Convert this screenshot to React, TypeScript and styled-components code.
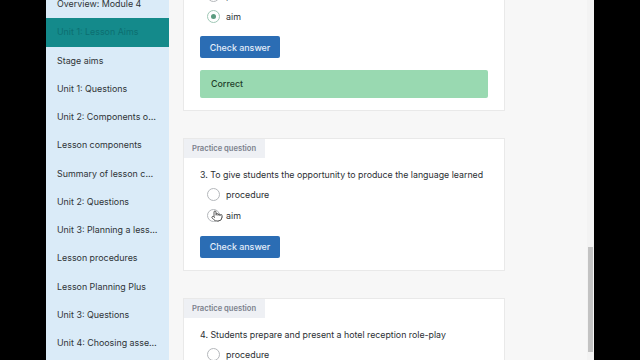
import React from 'react';
import styled, { createGlobalStyle } from 'styled-components';
import { Pointer } from 'lucide-react';

const GlobalStyle = createGlobalStyle`
  html, body {
    margin: 0;
    padding: 0;
    background: #000;
    overflow: hidden;
  }
  body {
    font-family: Inter, 'Noto Sans', sans-serif;
  }
`;

const sidebarItems = [
  'Overview: Module 4',
  'Unit 1: Lesson Aims',
  'Stage aims',
  'Unit 1: Questions',
  'Unit 2: Components of the lesson',
  'Lesson components',
  'Summary of lesson components',
  'Unit 2: Questions',
  'Unit 3: Planning a lesson',
  'Lesson procedures',
  'Lesson Planning Plus',
  'Unit 3: Questions',
  'Unit 4: Choosing assessment',
];

type Question = {
  number: number;
  text: string;
  options: string[];
  selected?: number;
  hover?: number;
  result?: string;
};

const questions: Question[] = [
  {
    number: 2,
    text: 'To enable students to use the present perfect',
    options: ['procedure', 'aim'],
    selected: 1,
    result: 'Correct',
  },
  {
    number: 3,
    text: 'To give students the opportunity to produce the language learned',
    options: ['procedure', 'aim'],
    hover: 1,
  },
  {
    number: 4,
    text: 'Students prepare and present a hotel reception role-play',
    options: ['procedure', 'aim'],
  },
];

export default function App() {
  return (
    <>
      <GlobalStyle />
      <Frame>
        <Sidebar>
          <SideList>
            {sidebarItems.map((item, i) => (
              <SideItem key={item} $active={i === 1}>
                {item}
              </SideItem>
            ))}
          </SideList>
        </Sidebar>
        <Main>
          <Content>
            {questions.map((q) => (
              <Card key={q.number}>
                <Tab>Practice question</Tab>
                <CardBody>
                  <QuestionText>
                    {q.number}. {q.text}
                  </QuestionText>
                  <Options>
                    {q.options.map((opt, i) => (
                      <Option key={opt}>
                        <RadioWrap>
                          <Radio $checked={q.selected === i} />
                          {q.hover === i && (
                            <Cursor>
                              <Pointer size={12} strokeWidth={1.6} />
                            </Cursor>
                          )}
                        </RadioWrap>
                        <OptionLabel>{opt}</OptionLabel>
                      </Option>
                    ))}
                  </Options>
                  <CheckButton>Check answer</CheckButton>
                  {q.result && <Feedback>{q.result}</Feedback>}
                </CardBody>
              </Card>
            ))}
          </Content>
          <ScrollTrack>
            <ScrollThumb />
          </ScrollTrack>
        </Main>
      </Frame>
    </>
  );
}

const Frame = styled.div`
  display: flex;
  height: 360px;
  width: 548px;
  margin-left: 46px;
  overflow: hidden;
`;

const Sidebar = styled.nav`
  width: 123px;
  flex-shrink: 0;
  background: #daebf8;
  overflow: hidden;
`;

const SideList = styled.div`
  display: flex;
  flex-direction: column;
  margin-top: -10px;
`;

const SideItem = styled.div<{ $active?: boolean }>`
  height: 28.25px;
  line-height: 28.25px;
  padding: 0 11px 0 11px;
  font-size: 8.9px;
  color: ${(p) => (p.$active ? '#0c6f71' : '#2f3437')};
  background: ${(p) => (p.$active ? '#148a8b' : 'transparent')};
  white-space: nowrap;
  overflow: hidden;
  text-overflow: ellipsis;
`;

const Main = styled.main`
  flex: 1;
  display: flex;
  background: #f7f7f7;
  overflow: hidden;
`;

const Content = styled.div`
  flex: 1;
  display: flex;
  flex-direction: column;
  gap: 27px;
  padding: 0 14px;
  margin-top: -62px;
`;

const Card = styled.section`
  width: 322px;
  flex-shrink: 0;
  display: flex;
  flex-direction: column;
  align-items: flex-start;
  background: #fff;
  border: 1px solid #e9e9e9;
  box-sizing: border-box;
`;

const Tab = styled.div`
  height: 19px;
  line-height: 19px;
  padding: 0 9px 0 8px;
  background: #eef0f4;
  color: #7b818c;
  font-size: 7.6px;
  font-weight: 600;
`;

const CardBody = styled.div`
  align-self: stretch;
  display: flex;
  flex-direction: column;
  align-items: flex-start;
  padding: 10px 16px 12px 16px;
`;

const QuestionText = styled.div`
  font-size: 8.8px;
  line-height: 14px;
  color: #2b2f33;
  white-space: nowrap;
`;

const Options = styled.div`
  display: flex;
  flex-direction: column;
  margin-top: 2.5px;
  padding-left: 7px;
`;

const Option = styled.div`
  display: flex;
  align-items: center;
  height: 21px;
  gap: 6px;
`;

const RadioWrap = styled.span`
  position: relative;
  display: inline-flex;
`;

const Radio = styled.span<{ $checked?: boolean }>`
  width: 13px;
  height: 13px;
  box-sizing: border-box;
  border-radius: 50%;
  border: 1px solid ${(p) => (p.$checked ? '#9fc8b6' : '#b4b7bb')};
  background: #fff;
  display: inline-flex;
  align-items: center;
  justify-content: center;
  &::after {
    content: '';
    display: ${(p) => (p.$checked ? 'block' : 'none')};
    width: 5px;
    height: 5px;
    border-radius: 50%;
    background: #5b9c80;
  }
`;

const Cursor = styled.span`
  position: absolute;
  left: 4px;
  top: 1px;
  color: #333;
  line-height: 0;
  svg {
    fill: #fff;
  }
`;

const OptionLabel = styled.span`
  font-size: 8.9px;
  color: #2b2f33;
`;

const CheckButton = styled.button`
  margin-top: 9.5px;
  height: 22px;
  width: 80px;
  border: none;
  border-radius: 2px;
  background: #2b6db4;
  color: #e6effa;
  font-family: Inter, 'Noto Sans', sans-serif;
  font-size: 8.9px;
  font-weight: 500;
  padding: 0;
`;

const Feedback = styled.div`
  margin-top: 11.5px;
  align-self: stretch;
  height: 28px;
  line-height: 28px;
  padding: 0 11px;
  border-radius: 2px;
  background: #99d9b1;
  color: #1f3f2a;
  font-size: 8.9px;
  font-weight: 500;
`;

const ScrollTrack = styled.div`
  width: 7px;
  flex-shrink: 0;
  background: #f3f3f3;
  display: flex;
  justify-content: center;
`;

const ScrollThumb = styled.div`
  margin-top: 247px;
  width: 5px;
  height: 105px;
  background: #c3c3c3;
`;
